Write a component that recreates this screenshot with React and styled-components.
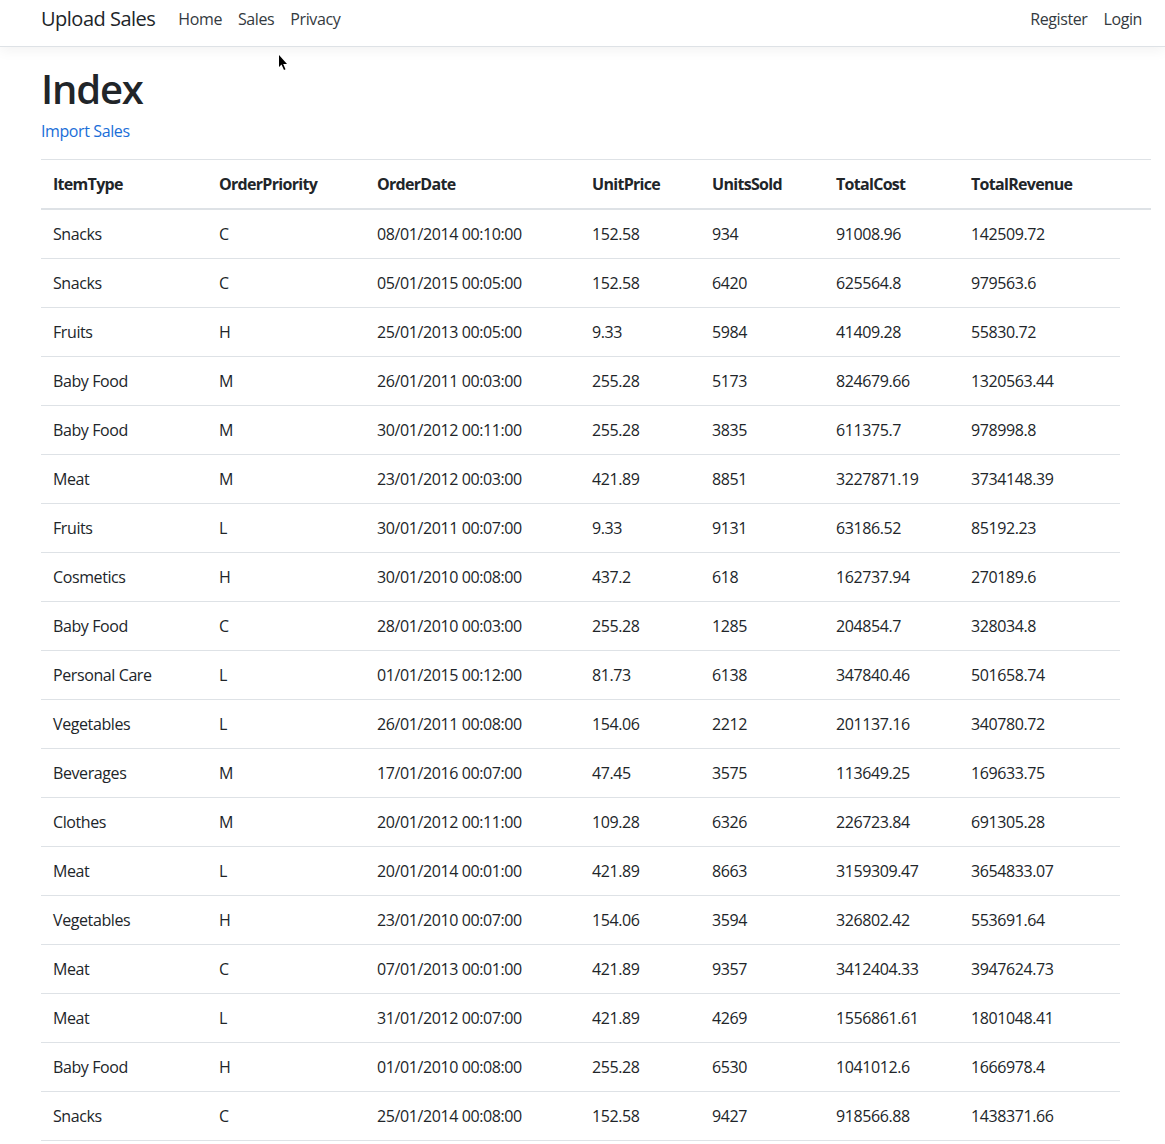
import React from "react";
import styled, { createGlobalStyle } from "styled-components";

const Global = createGlobalStyle`
  html, body { margin: 0; padding: 0; background: #fff; }
  body {
    font-family: "Segoe UI", "Open Sans", "Noto Sans", sans-serif;
    font-size: 16px;
    line-height: 1.5;
    color: #212529;
    letter-spacing: -0.4px;
  }
  * { box-sizing: border-box; }
`;

const Page = styled.div`
  position: relative;
  min-height: 1144px;
`;

const NavBar = styled.header`
  height: 47px;
  background: #fff;
  border-bottom: 1px solid #dee2e6;
  box-shadow: 0 4px 12px rgba(0, 0, 0, 0.05);
  display: flex;
  align-items: center;
  padding: 0 15px 0 41px;
  margin-bottom: 16px;
`;

const Brand = styled.a`
  font-size: 20px;
  color: #212529;
  text-decoration: none;
  margin-right: 15px;
  line-height: 30px;
  margin-top: -9px;
  letter-spacing: -0.5px;
`;

const NavList = styled.nav`
  display: flex;
  align-items: center;
  flex: ${(p) => (p.$grow ? 1 : "none")};
  margin-top: -9px;
`;

const NavLink = styled.a`
  color: #343a40;
  text-decoration: none;
  padding: 0 8px;
  line-height: 24px;
`;

const Main = styled.main`
  padding: 0 14px 0 41px;
`;

const Title = styled.h1`
  font-size: 40px;
  font-weight: 600;
  line-height: 44px;
  padding-top: 4px;
  margin: 0 0 8px;
  letter-spacing: -1.2px;
`;

const Para = styled.p`
  margin: 0 0 16px;
`;

const Link = styled.a`
  color: #1a6ed8;
  text-decoration: none;
`;

const Table = styled.table`
  width: 1110px;
  border-collapse: collapse;
  table-layout: fixed;
`;

const Th = styled.th`
  text-align: left;
  font-weight: 700;
  padding: 12px;
  border-top: 1px solid #dee2e6;
  border-bottom: 2px solid #dee2e6;
  line-height: 24px;
  width: ${(p) => p.$w}px;
  white-space: nowrap;
  letter-spacing: -0.7px;
`;

const Td = styled.td`
  padding: 12px;
  border-bottom: 1px solid #dee2e6;
  line-height: 24px;
  white-space: nowrap;
`;

const Cursor = styled.svg`
  position: absolute;
  left: 278px;
  top: 54px;
`;

const cols = [
  ["ItemType", 166],
  ["OrderPriority", 158],
  ["OrderDate", 215],
  ["UnitPrice", 120],
  ["UnitsSold", 124],
  ["TotalCost", 135],
  ["TotalRevenue", 161],
  ["", 31],
];

const rows = [
  ["Snacks", "C", "08/01/2014 00:10:00", "152.58", "934", "91008.96", "142509.72"],
  ["Snacks", "C", "05/01/2015 00:05:00", "152.58", "6420", "625564.8", "979563.6"],
  ["Fruits", "H", "25/01/2013 00:05:00", "9.33", "5984", "41409.28", "55830.72"],
  ["Baby Food", "M", "26/01/2011 00:03:00", "255.28", "5173", "824679.66", "1320563.44"],
  ["Baby Food", "M", "30/01/2012 00:11:00", "255.28", "3835", "611375.7", "978998.8"],
  ["Meat", "M", "23/01/2012 00:03:00", "421.89", "8851", "3227871.19", "3734148.39"],
  ["Fruits", "L", "30/01/2011 00:07:00", "9.33", "9131", "63186.52", "85192.23"],
  ["Cosmetics", "H", "30/01/2010 00:08:00", "437.2", "618", "162737.94", "270189.6"],
  ["Baby Food", "C", "28/01/2010 00:03:00", "255.28", "1285", "204854.7", "328034.8"],
  ["Personal Care", "L", "01/01/2015 00:12:00", "81.73", "6138", "347840.46", "501658.74"],
  ["Vegetables", "L", "26/01/2011 00:08:00", "154.06", "2212", "201137.16", "340780.72"],
  ["Beverages", "M", "17/01/2016 00:07:00", "47.45", "3575", "113649.25", "169633.75"],
  ["Clothes", "M", "20/01/2012 00:11:00", "109.28", "6326", "226723.84", "691305.28"],
  ["Meat", "L", "20/01/2014 00:01:00", "421.89", "8663", "3159309.47", "3654833.07"],
  ["Vegetables", "H", "23/01/2010 00:07:00", "154.06", "3594", "326802.42", "553691.64"],
  ["Meat", "C", "07/01/2013 00:01:00", "421.89", "9357", "3412404.33", "3947624.73"],
  ["Meat", "L", "31/01/2012 00:07:00", "421.89", "4269", "1556861.61", "1801048.41"],
  ["Baby Food", "H", "01/01/2010 00:08:00", "255.28", "6530", "1041012.6", "1666978.4"],
  ["Snacks", "C", "25/01/2014 00:08:00", "152.58", "9427", "918566.88", "1438371.66"],
];

export default function App() {
  return (
    <Page>
      <Global />
      <NavBar>
        <Brand href="#">Upload Sales</Brand>
        <NavList $grow>
          <NavLink href="#">Home</NavLink>
          <NavLink href="#">Sales</NavLink>
          <NavLink href="#">Privacy</NavLink>
        </NavList>
        <NavList>
          <NavLink href="#">Register</NavLink>
          <NavLink href="#">Login</NavLink>
        </NavList>
      </NavBar>
      <Main>
        <Title>Index</Title>
        <Para>
          <Link href="#">Import Sales</Link>
        </Para>
        <Table>
          <thead>
            <tr>
              {cols.map(([c, w], i) => (
                <Th key={i} $w={w}>
                  {c}
                </Th>
              ))}
            </tr>
          </thead>
          <tbody>
            {rows.map((r, i) => (
              <tr key={i}>
                {r.map((v, j) => (
                  <Td key={j}>{v}</Td>
                ))}
              </tr>
            ))}
          </tbody>
        </Table>
      </Main>
      <Cursor width="10" height="18" viewBox="0 0 10 18">
        <path d="M1 1 L1 13 L3.5 10.5 L6 16 L7.5 15.3 L5.2 10 L9 10 Z" fill="#000" />
      </Cursor>
    </Page>
  );
}
